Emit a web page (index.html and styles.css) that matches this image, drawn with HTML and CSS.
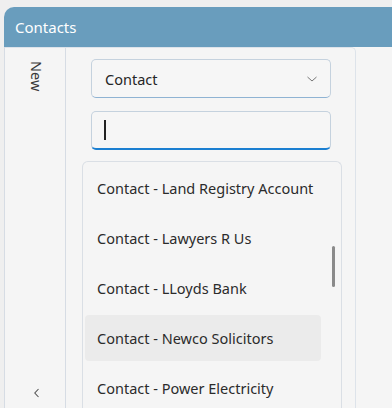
FILE: index.html
```html
<!DOCTYPE html>
<html>
<head>
<meta charset="utf-8">
<link rel="stylesheet" href="styles.css">
</head>
<body>
<div class="window">
  <div class="header">Contacts</div>
  <div class="body">
    <div class="panel">
      <div class="sidebar">
        <div class="new">New</div>
        <svg class="chev-left" width="8" height="10" viewBox="0 0 8 10"><path d="M5.5 1 L1.8 5 L5.5 9" fill="none" stroke="#555" stroke-width="1.1"/></svg>
      </div>
      <div class="main">
        <div class="select">
          <span>Contact</span>
          <svg width="12" height="8" viewBox="0 0 12 8"><path d="M1.5 2 L6 6 L10.5 2" fill="none" stroke="#777" stroke-width="1"/></svg>
        </div>
        <div class="input"><span class="caret"></span></div>
        <div class="list">
          <div class="item">Contact - Land Registry Account</div>
          <div class="item">Contact - Lawyers R Us</div>
          <div class="item">Contact - LLoyds Bank</div>
          <div class="item selected">Contact - Newco Solicitors</div>
          <div class="item">Contact - Power Electricity</div>
          <div class="scrollbar"></div>
        </div>
      </div>
    </div>
  </div>
</div>
</body>
</html>
```
FILE: styles.css
```css
html, body {
  margin: 0;
  padding: 0;
  background: #efefef;
  font-family: "Noto Sans", "Open Sans", sans-serif;
  overflow: hidden;
}
.window {
  margin: 7px 0 0 4px;
  height: 401px;
  border-top-left-radius: 10px;
  overflow: hidden;
  background: #f5f5f5;
  display: flex;
  flex-direction: column;
}
.header {
  background: #699dbd;
  color: #fff;
  height: 40px;
  padding-left: 11px;
  font-size: 15px;
  display: flex;
  align-items: center;
  flex: none;
}
.body {
  flex: 1;
  display: flex;
  border-left: 1px solid #d6dce4;
  background: #f5f5f5;
}
.panel {
  width: 351px;
  display: flex;
  border-top: 1px solid #dde3ea;
  border-right: 1px solid #dde3ea;
  border-top-right-radius: 5px;
  box-sizing: border-box;
}
.sidebar {
  width: 61px;
  border-right: 1px solid #d6dce4;
  display: flex;
  flex-direction: column;
  align-items: center;
  justify-content: space-between;
  padding: 13px 0 17px;
  box-sizing: border-box;
}
.new {
  writing-mode: vertical-rl;
  font-size: 14.5px;
  color: #3a3a3a;
  margin-left: 3px;
}
.chev-left {
  margin-left: 3px;
}
.main {
  flex: 1;
  display: flex;
  flex-direction: column;
  padding: 11px 0 0 16px;
}
.select, .input {
  width: 240px;
  height: 39px;
  box-sizing: border-box;
  margin-left: 9px;
  border: 1px solid #c5d2de;
  border-bottom-color: #8fb3d3;
  border-radius: 5px;
  background: #f6f6f6;
  display: flex;
  align-items: center;
}
.select {
  justify-content: space-between;
  padding: 0 12px 0 13px;
  font-size: 14.5px;
  color: #262626;
}
.input {
  margin-top: 13px;
  border-bottom: 2px solid #1b7fd1;
  padding-left: 12px;
}
.caret {
  width: 2px;
  height: 20px;
  background: #222;
}
.list {
  position: relative;
  margin-top: 11px;
  width: 260px;
  flex: 1;
  box-sizing: border-box;
  border: 1px solid #dadfe5;
  border-bottom: none;
  border-radius: 6px 6px 0 0;
  padding: 0 0 0 2px;
}
.item {
  width: 236px;
  height: 46px;
  margin: 4px 0;
  box-sizing: border-box;
  padding-left: 12px;
  display: flex;
  align-items: center;
  font-size: 14.5px;
  color: #2b2b2b;
  border-radius: 4px;
}
.item:first-child {
  margin-top: 3px;
}
.selected {
  background: #ebebeb;
}
.scrollbar {
  position: absolute;
  right: 6px;
  top: 84px;
  width: 3px;
  height: 41px;
  border-radius: 2px;
  background: #8a8a8a;
}
```
